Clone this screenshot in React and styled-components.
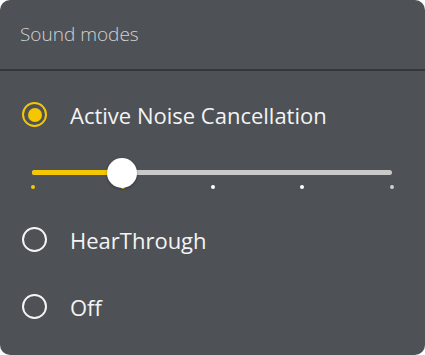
import React from "react";
import styled, { createGlobalStyle } from "styled-components";

const modes = [
  { id: "anc", label: "Active Noise Cancellation" },
  { id: "hear", label: "HearThrough" },
  { id: "off", label: "Off" }
];

const steps = [0, 1, 2, 3, 4];

export default function App() {
  const selected = "anc";
  const level = 1;
  const percent = (level / (steps.length - 1)) * 100;

  return (
    <>
      <GlobalStyle />
      <Card>
        <Header>Sound modes</Header>
        <Options>
          {modes.map((mode) => (
            <React.Fragment key={mode.id}>
              <OptionRow>
                <Radio $checked={mode.id === selected} />
                <OptionLabel>{mode.label}</OptionLabel>
              </OptionRow>
              {mode.id === "anc" && (
                <SliderBlock>
                  <Track>
                    <Fill style={{ width: `${percent}%` }} />
                    <Thumb style={{ left: `${percent}%` }} />
                  </Track>
                  <Ticks>
                    {steps.map((s) => (
                      <Tick key={s} $active={s <= level} $last={s === steps.length - 1} />
                    ))}
                  </Ticks>
                </SliderBlock>
              )}
            </React.Fragment>
          ))}
        </Options>
      </Card>
    </>
  );
}

// Styles

const GlobalStyle = createGlobalStyle`
  body {
    margin: 0;
    background: #ffffff;
    font-family: "Open Sans", Lato, sans-serif;
  }
`;

const Card = styled.div`
  width: 425px;
  height: 355px;
  border-radius: 10px;
  background: #4e5156;
  overflow: hidden;
`;

const Header = styled.div`
  height: 67px;
  display: flex;
  align-items: center;
  padding: 0 0 2px 20px;
  border-bottom: 2px solid #35373a;
  font-size: 19px;
  font-weight: 300;
  color: #d2d3d4;
`;

const Options = styled.div`
  padding-top: 10px;
`;

const OptionRow = styled.div`
  height: 67px;
  display: flex;
  align-items: center;
  gap: 23px;
  padding-left: 22px;
`;

const Radio = styled.span`
  width: 25px;
  height: 25px;
  box-sizing: border-box;
  border-radius: 50%;
  border: 2.5px solid ${(p) => (p.$checked ? "#f5c700" : "#f4f4f4")};
  display: flex;
  align-items: center;
  justify-content: center;

  &::after {
    content: "";
    display: ${(p) => (p.$checked ? "block" : "none")};
    width: 14px;
    height: 14px;
    border-radius: 50%;
    background: #f5c700;
  }
`;

const OptionLabel = styled.span`
  font-size: 22px;
  color: #f4f4f4;
`;

const SliderBlock = styled.div`
  height: 58px;
  padding: 22px 33px 0 32px;
  box-sizing: border-box;
`;

const Track = styled.div`
  position: relative;
  height: 5px;
  border-radius: 3px;
  background: #c9c9c9;
`;

const Fill = styled.div`
  height: 100%;
  border-radius: 3px;
  background: #f5c700;
`;

const Thumb = styled.div`
  position: absolute;
  top: 50%;
  width: 30px;
  height: 30px;
  border-radius: 50%;
  background: #ffffff;
  transform: translate(-50%, -50%);
  box-shadow: 0 1px 3px rgba(0, 0, 0, 0.35);
`;

const Ticks = styled.div`
  display: flex;
  justify-content: space-between;
  margin: 10px -2px 0 -1px;
`;

const Tick = styled.span`
  width: 4px;
  height: 4px;
  border-radius: 50%;
  background: ${(p) => (p.$active ? "#f5c700" : p.$last ? "#cfcfcf" : "#ffffff")};
`;
